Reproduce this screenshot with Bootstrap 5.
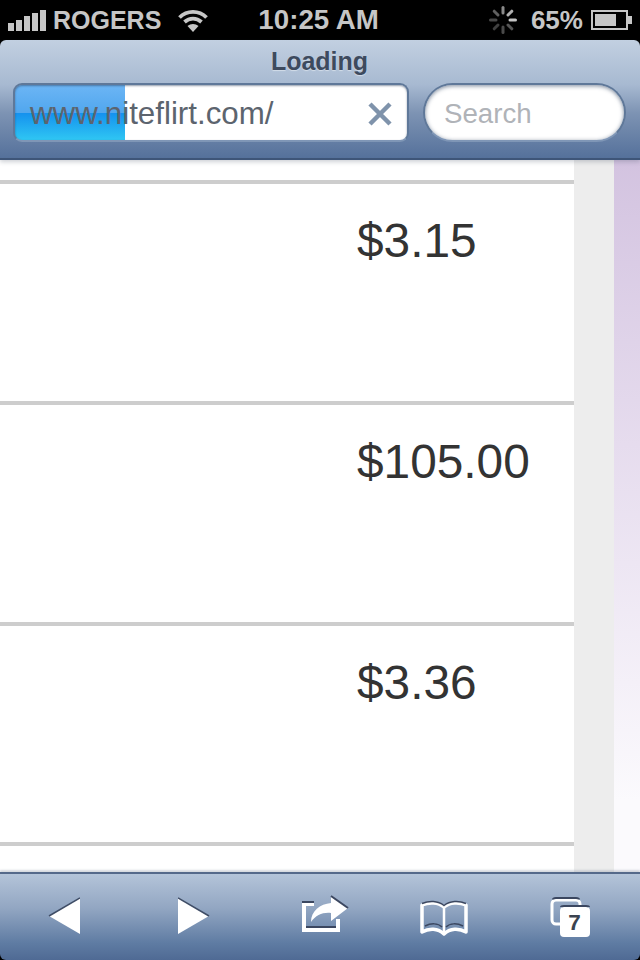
<!DOCTYPE html>
<html lang="en">
<head>
    <meta charset="UTF-8">
    <title>Loading</title>
    <link href="https://cdn.jsdelivr.net/npm/bootstrap@5.3.3/dist/css/bootstrap.min.css" rel="stylesheet">
    <style>
        body { font-family: "Liberation Sans", Arial, sans-serif; background: #000; overflow: hidden; }
        .phone { width: 640px; height: 960px; }

        /* status bar */
        .status-bar { height: 40px; padding: 0 7px 0 8px; color: #c6c6c6; font-size: 25px; font-weight: 700; line-height: 40px; }
        .carrier { margin-left: 7px; }
        .wifi-icon { margin-left: 17px; }
        .clock { margin-left: 50px; font-size: 27.700px; }
        .spinner-icon { margin-left: 110px; }
        .battery-pct { margin-left: 14px; font-size: 26px; }
        .battery-icon { margin-left: 8px; }

        /* address bar */
        .top-bar { height: 120px; position: relative; z-index: 1; border-radius: 6px 6px 0 0; background: linear-gradient(#c2d0e1, #a7b9d1 38%, #7d93b3 62%, #55719b); border-bottom: 2px solid #3e5578; padding: 0 14px 0 13px; box-shadow: 0 2px 4px rgba(60, 70, 90, .25); }
        .page-title { height: 43px; padding-top: 5px; font-size: 25px; line-height: 32px; color: #3d4a5e; text-shadow: 0 1px 1px #d3dde9; }
        .url-field { width: 396px; height: 59px; border: 2px solid #5f7899; border-bottom-color: #7f96b6; border-radius: 9px; padding: 3px 15px 0; font-size: 31.300px; color: #5c646e;
            background-color: #fff;
            background-image: linear-gradient(#6cb5f5, #51a7ee 50%, #1490ee 50%, #2fc6f3);
            background-size: 110px 100%; background-repeat: no-repeat; box-shadow: inset 0 1px 2px rgba(40, 60, 90, .5); }
        .search-field { width: 203px; height: 59px; margin-left: 14px; padding: 3px 19px 0; border: 2px solid #5f7899; border-bottom-color: #7f96b6; background: #fff; font-size: 27.700px; color: #b0b3b8; box-shadow: inset 0 1px 4px rgba(40, 60, 90, .6); }

        /* page content */
        .page-area { min-height: 0; background: #ededed; }
        .page-main { width: 574px; padding-top: 20px; }
        .price-row { height: 220.800px; border-top: 4px solid #cdcdcd; padding: 27px 0 0 357px; font-size: 47.800px; line-height: 60px; color: #333; }
        .page-gutter { width: 40px; }
        .page-side { width: 26px; background: linear-gradient(#d3c3e0, #e6dcee 40%, #fbfafd 90%); }

        /* bottom toolbar */
        .bottom-bar { height: 88px; flex: none; padding-left: 48px; border-radius: 0 0 6px 6px; border-top: 2px solid #55698a; background: linear-gradient(#b4c4d9, #92a6c2 40%, #5f7ca3 80%, #4f6a94); box-shadow: 0 -2px 2px rgba(120, 130, 150, .3); }
        .gap-fwd { margin-left: 98px; }
        .gap-share { margin-left: 91px; }
        .gap-book { margin-left: 71px; }
        .gap-tabs { margin-left: 82px; }
        .tab-count { font: 700 22.500px "Liberation Sans", Arial, sans-serif; fill: #3b4350; }
    </style>
</head>
<body>

<div class="phone d-flex flex-column">

    <!-- status bar -->
    <div class="status-bar d-flex align-items-center bg-black flex-shrink-0">
        <svg width="38" height="22" viewBox="0 0 38 22" fill="#c6c6c6">
            <rect x="0" y="14" width="6" height="8"/>
            <rect x="8" y="11" width="6" height="11"/>
            <rect x="16" y="7" width="6" height="15"/>
            <rect x="24" y="4" width="6" height="18"/>
            <rect x="32" y="1" width="6" height="21"/>
        </svg>
        <span class="carrier">ROGERS</span>
        <svg class="wifi-icon" width="30" height="23" viewBox="0 0 30 23" fill="none" stroke="#c6c6c6" stroke-width="3.800">
            <path d="M1.500 8.500C9 1 21 1 28.500 8.500"/>
            <path d="M6.500 13C11.500 8.500 18.500 8.500 23.500 13"/>
            <path d="M15 23L9.500 17C12.500 14.200 17.500 14.200 20.500 17Z" fill="#c6c6c6" stroke="none"/>
        </svg>
        <span class="clock">10:25 AM</span>
        <svg class="spinner-icon" width="28" height="28" viewBox="0 0 28 28" fill="none" stroke-width="3" stroke-linecap="round">
            <path d="M14 1.500V7" stroke="#8a8a8a"/>
            <path d="M22.800 5.200L19 9" stroke="#b0b0b0"/>
            <path d="M26.500 14H21" stroke="#c4c4c4"/>
            <path d="M22.800 22.800L19 19" stroke="#555"/>
            <path d="M14 26.500V21" stroke="#4a4a4a"/>
            <path d="M5.200 22.800L9 19" stroke="#404040"/>
            <path d="M1.500 14H7" stroke="#484848"/>
            <path d="M5.200 5.200L9 9" stroke="#606060"/>
        </svg>
        <span class="battery-pct">65%</span>
        <svg class="battery-icon" width="41" height="20" viewBox="0 0 41 20">
            <rect x="1" y="1" width="35" height="18" fill="none" stroke="#c6c6c6" stroke-width="2"/>
            <rect x="4" y="4" width="21" height="12" fill="#c6c6c6"/>
            <rect x="37" y="6" width="4" height="8" fill="#c6c6c6"/>
        </svg>
    </div>

    <!-- address bar -->
    <div class="top-bar flex-shrink-0">
        <div class="page-title text-center fw-bold">Loading</div>
        <div class="d-flex">
            <div class="url-field d-flex align-items-center justify-content-between">
                <span>www.niteflirt.com/</span>
                <svg width="24" height="24" viewBox="0 0 24 24" stroke="#7f93ab" stroke-width="4.500">
                    <path d="M2 2L22 22M22 2L2 22"/>
                </svg>
            </div>
            <div class="search-field d-flex align-items-center rounded-pill">Search</div>
        </div>
    </div>

    <!-- page content -->
    <div class="page-area d-flex flex-grow-1 overflow-hidden">
        <div class="page-main bg-white">
            <div class="price-row">$3.15</div>
            <div class="price-row">$105.00</div>
            <div class="price-row">$3.36</div>
            <div class="price-row"></div>
        </div>
        <div class="page-gutter"></div>
        <div class="page-side"></div>
    </div>

    <!-- bottom toolbar -->
    <div class="bottom-bar d-flex align-items-center">
        <svg width="32" height="40" viewBox="0 0 32 40">
            <path d="M32 1V37L1 19Z" fill="#fff"/>
            <path d="M32 1L1 19" stroke="#3f4d66" stroke-width="1.500" fill="none"/>
        </svg>
        <svg class="gap-fwd" width="32" height="40" viewBox="0 0 32 40">
            <path d="M0 1V37L31 19Z" fill="#fff"/>
            <path d="M0 1L31 19" stroke="#3f4d66" stroke-width="1.500" fill="none"/>
        </svg>
        <svg class="gap-share" width="48" height="44" viewBox="0 0 48 44">
            <path d="M1 7H13V11H5V32H35V24H39V37H1Z" fill="#fff"/>
            <path d="M1 7H13M5 32H35" stroke="#3b4760" stroke-width="2" fill="none"/>
            <path d="M10 27C10 16 19 9 30 8V1L47 13L30 26V18C22 17 15 20 10 27Z" fill="#fff"/>
            <path d="M30 1L47 13" stroke="#3b4760" stroke-width="2" fill="none"/>
        </svg>
        <svg class="gap-book" width="48" height="40" viewBox="0 0 48 40" fill="none">
            <path d="M2 8C9 5 18 5 24 10C30 5 39 5 46 8V35C39 31 30 31 24 37C18 31 9 31 2 35Z" stroke="#fff" stroke-width="3.500" stroke-linejoin="round"/>
            <path d="M24 10V36" stroke="#fff" stroke-width="2.500"/>
            <path d="M2 6.500C9 3.500 18 3.500 24 8.500C30 3.500 39 3.500 46 6.500M5 29C11 26 18 26 22 30M26 30C30 26 37 26 43 29" stroke="#3b4760" stroke-width="1.500"/>
        </svg>
        <svg class="gap-tabs" width="40" height="40" viewBox="0 0 40 40">
            <rect x="2" y="3" width="28" height="24" rx="4" fill="none" stroke="#fff" stroke-width="3"/>
            <path d="M3 2.500Q3 1 6 1H26Q29 1 29 2.500" fill="none" stroke="#3b4760" stroke-width="2"/>
            <rect x="10" y="10" width="30" height="30" rx="4" fill="#fff"/>
            <path d="M11 10Q11 9 14 9H36Q39 9 39 10" fill="none" stroke="#3b4760" stroke-width="2"/>
            <text class="tab-count" x="24.500" y="33" text-anchor="middle">7</text>
        </svg>
    </div>

</div>

<script src="https://cdn.jsdelivr.net/npm/bootstrap@5.3.3/dist/js/bootstrap.bundle.min.js"></script>
</body>
</html>
